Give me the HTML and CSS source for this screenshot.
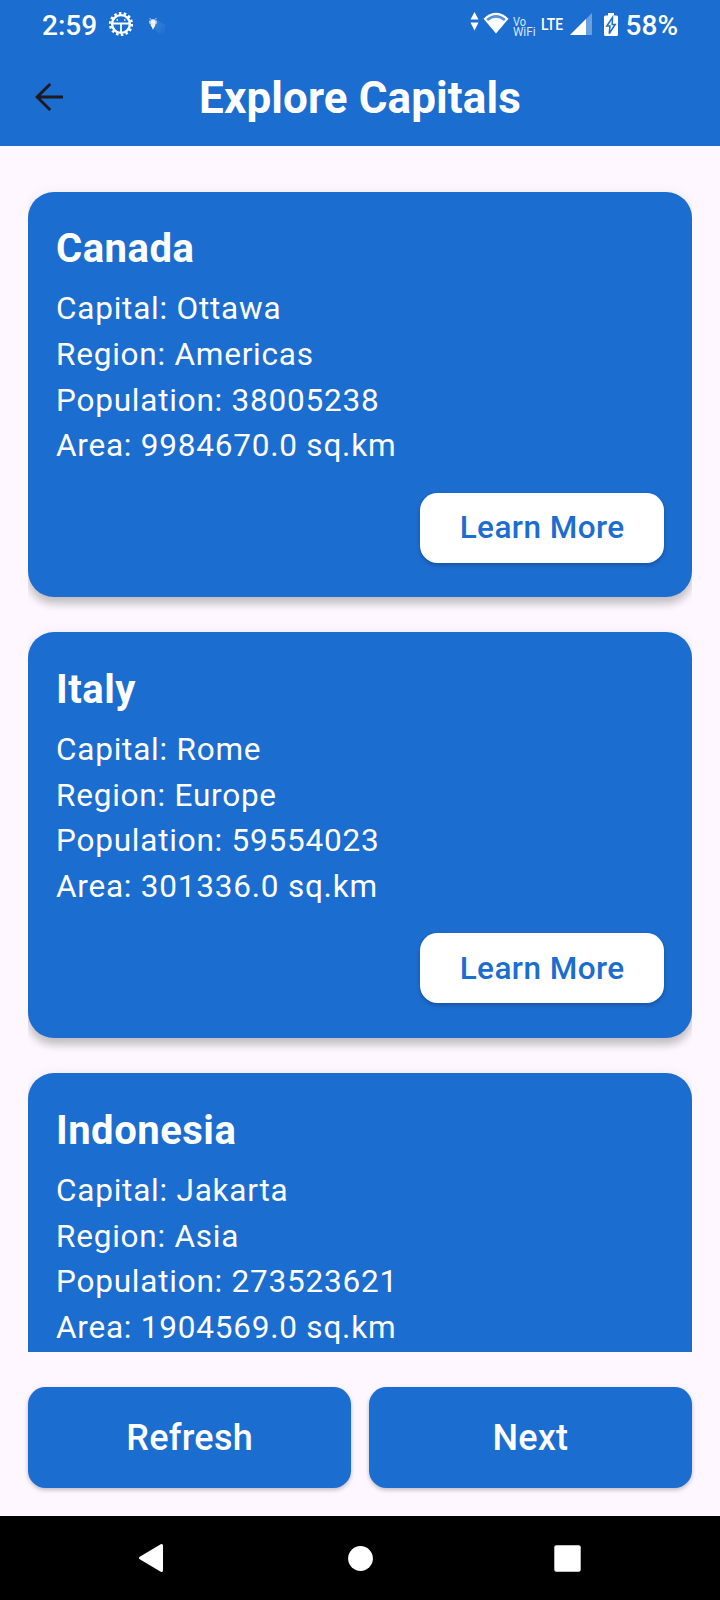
FILE: index.html
```html
<!DOCTYPE html>
<html lang="en">
<head>
<meta charset="utf-8">
<title>Explore Capitals</title>
<link rel="stylesheet" href="styles.css">
</head>
<body>
<div class="app">
  <header class="header">
    <div class="status">
      <span class="time">2:59</span>
      <svg class="gear" width="26" height="26" viewBox="0 0 26 26" fill="none" stroke="#fff">
        <circle cx="13" cy="13" r="10.800" stroke-width="2.600" stroke-dasharray="2.500 2.347"/>
        <circle cx="13" cy="13" r="8.900" stroke-width="2.400"/>
        <path d="M4.500 12.500H21.500M13 13V21.500" stroke-width="1.800"/>
        <path d="M8.500 9h1.500M16 9h1.500" stroke-width="1.300"/>
      </svg>
      <svg class="bug" width="20" height="22" viewBox="0 0 20 22">
        <defs><linearGradient id="trail" x1="0" y1="0" x2="1" y2="1"><stop offset="0" stop-color="#fff" stop-opacity=".15"/><stop offset="1" stop-color="#fff" stop-opacity="0"/></linearGradient></defs>
        <path d="M6 13 10 6 18 11V20H12Z" fill="url(#trail)"/>
        <path d="M2.500 4 5 6.500M9.500 4 7 6.500M2 8H10M3 6V10M9 6V10" stroke="#fff" stroke-opacity=".7"/>
        <ellipse cx="6" cy="9.300" rx="2.500" ry="4" fill="#fff" fill-opacity=".9"/>
        <path d="M4.500 12h3l-1.500 4z" fill="#fff"/>
      </svg>
      <span class="grow"></span>
      <svg class="arrows" width="9" height="19" viewBox="0 0 9 19" fill="#fff"><path d="M4.500 0 8.500 7.500H.5ZM4.500 18.500.5 10.500H8.500Z"/></svg>
      <svg class="wifi" width="26" height="22" viewBox="0 0 26 22"><path d="M.5 6.700Q13-5 25.500 6.700L13 21.500Z" fill="#fff"/><path d="M3.300 6.900Q13-.8 22.700 6.900L21 8.900Q13 2.600 5 8.900Z" fill="#1c6dd0" fill-opacity=".75"/></svg>
      <svg class="vowifi" width="24" height="21" viewBox="0 0 24 21"><text x="0" y="9.500" textLength="13" lengthAdjust="spacingAndGlyphs">Vo</text><text x="0" y="20" textLength="22.500" lengthAdjust="spacingAndGlyphs">WiFi</text></svg>
      <svg class="lte" width="22" height="16" viewBox="0 0 22 16"><text x="0" y="14" textLength="22" lengthAdjust="spacingAndGlyphs">LTE</text></svg>
      <svg class="signal" width="22" height="22" viewBox="0 0 22 22" fill="#fff"><path d="M0 22 22 0V22Z" fill-opacity=".35"/><path d="M0 22 16 6V22Z"/></svg>
      <svg class="battery" width="14" height="23" viewBox="0 0 14 23"><path d="M4 0H10V2.500H12.500Q14 2.500 14 4V21.500Q14 23 12.500 23H1.500Q0 23 0 21.500V4Q0 2.500 1.500 2.500H4Z" fill="#fff"/><path d="M8.500 4.500 2.800 13H6L5.200 20.500 11.200 11.500H8.200Z" fill="#fff" stroke="#1c6dd0" stroke-width="1.500"/></svg>
      <span class="percent">58%</span>
    </div>
    <div class="appbar">
      <svg class="back" width="28" height="28" viewBox="0 0 28 28" fill="none" stroke="#1d1b20" stroke-width="3"><path d="M28 14H2M15.200 1 2.200 14 15.200 27"/></svg>
      <h1 class="heading">Explore Capitals</h1>
    </div>
  </header>
  <main class="list">
    <article class="card">
      <h2 class="name">Canada</h2>
      <p class="fact">Capital: Ottawa</p>
      <p class="fact">Region: Americas</p>
      <p class="fact">Population: 38005238</p>
      <p class="fact">Area: 9984670.0 sq.km</p>
      <button class="more">Learn More</button>
    </article>
    <article class="card">
      <h2 class="name">Italy</h2>
      <p class="fact">Capital: Rome</p>
      <p class="fact">Region: Europe</p>
      <p class="fact">Population: 59554023</p>
      <p class="fact">Area: 301336.0 sq.km</p>
      <button class="more">Learn More</button>
    </article>
    <article class="card">
      <h2 class="name">Indonesia</h2>
      <p class="fact">Capital: Jakarta</p>
      <p class="fact">Region: Asia</p>
      <p class="fact">Population: 273523621</p>
      <p class="fact">Area: 1904569.0 sq.km</p>
    </article>
  </main>
  <div class="actions">
    <button class="action">Refresh</button>
    <button class="action">Next</button>
  </div>
  <nav class="navbar">
    <svg width="26" height="30" viewBox="0 0 26 30"><path d="M23.500 2.500V27.500L2.500 15Z" fill="#fff" stroke="#fff" stroke-width="3" stroke-linejoin="round"/></svg>
    <svg class="home" width="25" height="25" viewBox="0 0 25 25"><circle cx="12.500" cy="12.500" r="12.400" fill="#fff"/></svg>
    <svg width="27" height="27" viewBox="0 0 27 27"><rect x=".3" y=".3" width="26.400" height="26.400" rx="2" fill="#fff"/></svg>
  </nav>
</div>
</body>
</html>
```
FILE: styles.css
```css
* { box-sizing: border-box; }
body { margin: 0; background: #fef7ff; font-family: Roboto, sans-serif; }
h1, h2, p { margin: 0; }
button { border: 0; font-family: inherit; padding: 0; }
svg { flex: none; display: block; overflow: visible; }
.app { width: 720px; height: 1600px; display: flex; flex-direction: column; overflow: hidden; }
.header { height: 146px; flex: none; background: #1c6dd0; color: #fff; }
.status { height: 49px; display: flex; align-items: center; padding: 0 42px 0 42px; }
.time, .percent { font-size: 28px; font-weight: 500; line-height: 49px; padding-top: 2px; }
.gear { margin-left: 11px; margin-top: -1px; }
.bug { margin-left: 13px; }
.grow { flex: 1; }
.arrows { margin-right: 4px; margin-top: -6px; }
.wifi { margin-right: 4px; margin-top: -3px; }
.vowifi { margin-right: 4px; margin-top: 4px; font-size: 12px; fill: #fff; fill-opacity: .85; }
.lte { margin-right: 7px; margin-top: -2px; font-size: 17px; font-weight: 500; fill: #fff; }
.signal { margin-right: 12px; margin-top: -1px; }
.battery { margin-right: 8px; margin-top: -1px; }
.appbar { height: 97px; display: flex; align-items: center; padding-left: 35px; }
.back { margin-right: -63px; margin-top: -1px; }
.heading { flex: 1; text-align: center; font-size: 44px; font-weight: 700; line-height: 52px; letter-spacing: .1px; }
.list { height: 1206px; flex: none; margin: 0 28px; padding-top: 45.500px; overflow: hidden; display: flex; flex-direction: column; gap: 35px; }
.card { height: 405.900px; flex: none; background: #1c6dd0; color: #fff; border-radius: 26px; padding: 29.300px 28px 28px; display: flex; flex-direction: column; box-shadow: 0 7px 9px rgba(0,0,0,.2), 0 2px 14px rgba(0,0,0,.08); }
.name { font-size: 40px; font-weight: 700; line-height: 56px; letter-spacing: .5px; margin-bottom: 9.300px; }
.fact { font-size: 31.500px; line-height: 45.700px; letter-spacing: .775px; }
.more { align-self: flex-end; flex: none; width: 243.700px; height: 70px; margin-top: 23.700px; border-radius: 17.500px; background: #fff; color: #1c6dd0; font-size: 31.500px; font-weight: 500; letter-spacing: .45px; box-shadow: 0 2px 4px rgba(0,0,0,.25); }
.actions { display: grid; grid-template-columns: 1fr 1fr; gap: 17.500px; padding: 34.500px 28px 0; height: 164px; flex: none; }
.action { height: 101.500px; border-radius: 17.500px; background: #1c6dd0; color: #fff; font-size: 36px; font-weight: 500; letter-spacing: .25px; padding-top: 1px; box-shadow: 0 2px 4px rgba(0,0,0,.25); }
.navbar { height: 84px; flex: none; background: #000; display: flex; justify-content: space-between; align-items: center; padding: 0 139px 0 138px; }
.home { margin-left: 3px; }
```
